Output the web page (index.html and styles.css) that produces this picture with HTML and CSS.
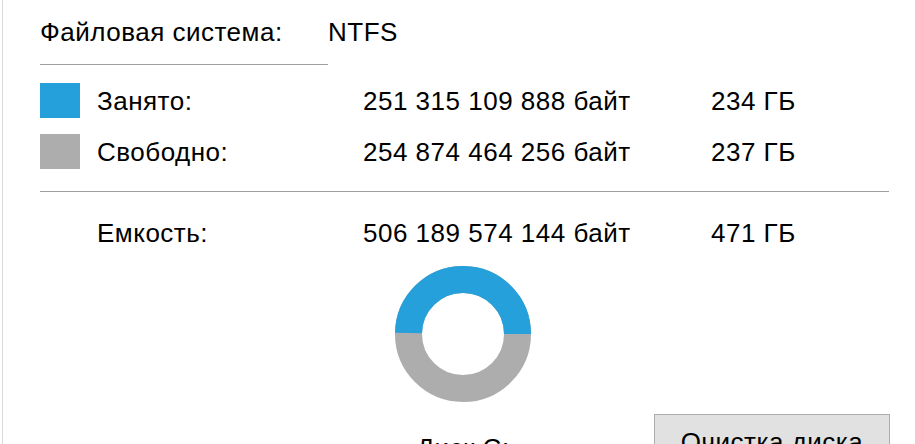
FILE: index.html
```html
<!DOCTYPE html>
<html>
	<head>
		<meta charset="utf-8" />
		<title>Свойства: Локальный диск</title>
		<link rel="stylesheet" href="styles.css">
	</head>
	<body>
		<div class="page">
			<div class="fs">
				<span class="fs-label">Файловая система:</span>
				<span>NTFS</span>
			</div>
			<div class="line short"></div>

			<div class="usage">
				<div class="swatch used"></div>
				<span>Занято:</span>
				<span>251 315 109 888 байт</span>
				<span>234 ГБ</span>

				<div class="swatch free"></div>
				<span>Свободно:</span>
				<span>254 874 464 256 байт</span>
				<span>237 ГБ</span>
			</div>
			<div class="line long"></div>

			<div class="usage total">
				<div></div>
				<span>Емкость:</span>
				<span>506 189 574 144 байт</span>
				<span>471 ГБ</span>
			</div>

			<div class="chart-row">
				<svg class="donut" width="136" height="136" viewBox="0 0 136 136">
					<circle cx="68" cy="68" r="54.5" fill="none" stroke="#adadad" stroke-width="27"/>
					<!-- занято: 49,65% окружности -->
					<circle cx="68" cy="68" r="54.5" fill="none" stroke="#26a0da" stroke-width="27"
						stroke-dasharray="170 400" transform="rotate(181 68 68)"/>
				</svg>
			</div>

			<div class="bottom">
				<div class="drive">Диск С:</div>
				<button class="clean" type="button">Очистка диска</button>
			</div>
		</div>
	</body>
</html>
```

FILE: styles.css
```css
html, body{
	margin: 0;
	background: #ffffff;
}
body{
	width: 915px;
	height: 444px;
	overflow: hidden;
	font-family: "Liberation Sans", Arial, sans-serif;
	font-size: 26px;
	letter-spacing: 0.5px;
	color: #000000;
}
.page{
	margin-left: 2px;
	border-left: 1px solid #dadada;
	padding-left: 37px;
	height: 444px;
	box-sizing: border-box;
}
.fs{
	display: flex;
	padding-top: 18px;
	line-height: 28px;
}
.fs-label{
	width: 288px;
}
.line{
	height: 1px;
	background: #a0a0a0;
}
.line.short{
	width: 288px;
	margin-top: 18px;
}
.line.long{
	width: 849px;
	margin-top: 22px;
}
.usage{
	display: grid;
	grid-template-columns: 57px 266px 348px auto;
	grid-auto-rows: 35px;
	row-gap: 16px;
	align-items: center;
	margin-top: 18px;
	line-height: 28px;
}
.usage.total{
	margin-top: 27px;
	grid-auto-rows: 28px;
}
.swatch{
	width: 40px;
	height: 35px;
}
.swatch.used{
	background: #26a0da;
}
.swatch.free{
	background: #adadad;
}
.chart-row{
	display: flex;
	padding-left: 355px;
	margin-top: 19px;
}
.donut{
	display: block;
}
.bottom{
	display: flex;
	align-items: flex-start;
	margin-top: 12px;
}
.drive{
	width: 136px;
	margin-left: 355px;
	margin-top: 20px;
	text-align: center;
	line-height: 28px;
	white-space: nowrap;
}
.clean{
	margin-left: 123px;
	width: 236px;
	height: 48px;
	padding: 8px 0 0 0;
	border: 1px solid #adadad;
	background: #e1e1e1;
	font-family: "Liberation Sans", Arial, sans-serif;
	font-size: 26px;
	letter-spacing: 0.5px;
	line-height: 28px;
	color: #000000;
	text-align: center;
	display: block;
}
```
